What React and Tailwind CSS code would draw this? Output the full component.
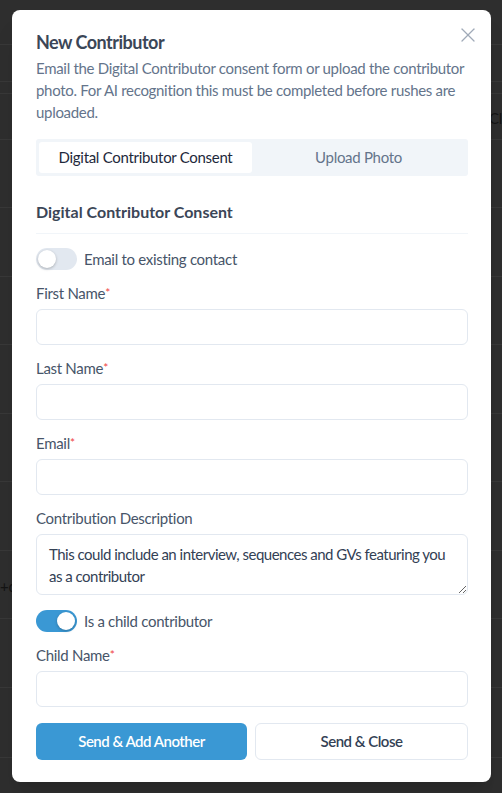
import React, { useState } from 'react';
import { X } from 'lucide-react';

const font = { fontFamily: 'Lato, "Noto Sans", "Liberation Sans", sans-serif' };

const Toggle = ({ on, onClick }) => (
  <button
    type="button"
    onClick={onClick}
    className={`relative flex h-[22px] w-[41px] shrink-0 items-center rounded-full p-[2px] transition-colors ${
      on ? 'bg-[#3a98d4]' : 'bg-[#e2e8f0]'
    }`}
  >
    <span
      className={`h-[18px] w-[18px] rounded-full bg-white shadow-[0_1px_3px_rgba(0,0,0,0.25)] transition-transform ${
        on ? 'translate-x-[19px]' : 'translate-x-0'
      }`}
    />
  </button>
);

const Field = ({ label, required }) => (
  <div className="mt-[13px] flex flex-col">
    <label className="mb-[6px] text-[15px] leading-5 text-[#475569]">
      {label}
      {required && <span className="text-[12px] align-top text-[#ef4444]">*</span>}
    </label>
    <input className="h-9 w-full rounded-md border border-[#e2e8f0] bg-white px-3 text-[15px] text-[#334155] outline-none" />
  </div>
);

const rows = [45, 37, 12, 46, 68, 69, 68, 69, 68, 69, 68, 69, 70];

export default function App() {
  const [existing, setExisting] = useState(false);
  const [child, setChild] = useState(true);
  const [tab, setTab] = useState('consent');

  return (
    <div style={font} className="relative h-[793px] w-full overflow-hidden bg-[#2e2e2e] tracking-[-0.3px]">
      {/* page behind the overlay */}
      <div className="flex flex-col">
        {rows.map((h, i) => (
          <div key={i} style={{ height: h }} className="relative border-b border-[#383838] text-[15px] text-[#141414]">
            {i === 3 && <span className="absolute right-0 top-[13px]">Cl</span>}
            {i === 10 && <span className="absolute left-0 top-[24px]">+d</span>}
            {i === 12 && <span className="absolute left-[310px] top-[22px]">2025-09-11 23:40:08</span>}
          </div>
        ))}
      </div>

      {/* Modal */}
      <div className="absolute left-[12px] top-[10px] w-[479px] rounded-lg bg-white pb-[22px] pl-6 pr-[23px] pt-5 shadow-xl">
        <button className="absolute right-[11px] top-[13px] text-[#a0aab8]">
          <X className="h-6 w-6" strokeWidth={1.3} />
        </button>

        <h2 className="text-[18px] font-bold leading-6 tracking-[-0.5px] text-[#3b4657]">New Contributor</h2>
        <p className="mt-[3px] text-[15px] leading-[22px] text-[#64748b]">
          Email the Digital Contributor consent form or upload the contributor photo. For AI recognition this
          must be completed before rushes are uploaded.
        </p>

        {/* Tabs */}
        <div className="mt-4 flex h-[37px] rounded-[3px] bg-[#f1f5f9] p-[3px]">
          <button
            onClick={() => setTab('consent')}
            className={`flex-1 rounded-[3px] text-[15px] ${
              tab === 'consent' ? 'bg-white text-[#1e293b]' : 'text-[#64748b]'
            }`}
          >
            Digital Contributor Consent
          </button>
          <button
            onClick={() => setTab('photo')}
            className={`flex-1 rounded-[3px] text-[15px] ${
              tab === 'photo' ? 'bg-white text-[#1e293b]' : 'text-[#64748b]'
            }`}
          >
            Upload Photo
          </button>
        </div>

        {/* Section */}
        <h3 className="mt-6 border-b border-[#f1f5f9] pb-[9px] text-[16px] font-bold leading-6 tracking-normal text-[#3b4657]">
          Digital Contributor Consent
        </h3>

        <div className="mt-[14px] flex items-center gap-[7px]">
          <Toggle on={existing} onClick={() => setExisting(!existing)} />
          <span className="text-[15px] text-[#475569]">Email to existing contact</span>
        </div>

        <div className="mt-[-1px]">
          <Field label="First Name" required />
          <Field label="Last Name" required />
          <Field label="Email" required />
        </div>

        <div className="mt-[13px] flex flex-col">
          <label className="mb-[6px] text-[15px] leading-5 text-[#475569]">Contribution Description</label>
          <textarea
            defaultValue="This could include an interview, sequences and GVs featuring you as a contributor"
            className="h-[61px] w-full rounded-md border border-[#e2e8f0] pl-3 pr-2 pt-2 text-[15px] leading-[22px] tracking-[-0.5px] text-[#334155] outline-none"
          />
        </div>

        <div className="mt-[15px] flex items-center gap-[7px]">
          <Toggle on={child} onClick={() => setChild(!child)} />
          <span className="text-[15px] text-[#475569]">Is a child contributor</span>
        </div>

        {child && <Field label="Child Name" required />}

        <div className="mt-4 flex gap-2">
          <button className="h-[37px] flex-1 rounded-md bg-[#3a98d4] text-[15px] font-semibold tracking-[-0.5px] text-white">
            Send &amp; Add Another
          </button>
          <button className="h-[37px] flex-1 rounded-md border border-[#e2e8f0] bg-white text-[15px] font-semibold tracking-[-0.5px] text-[#334155]">
            Send &amp; Close
          </button>
        </div>
      </div>
    </div>
  );
}
